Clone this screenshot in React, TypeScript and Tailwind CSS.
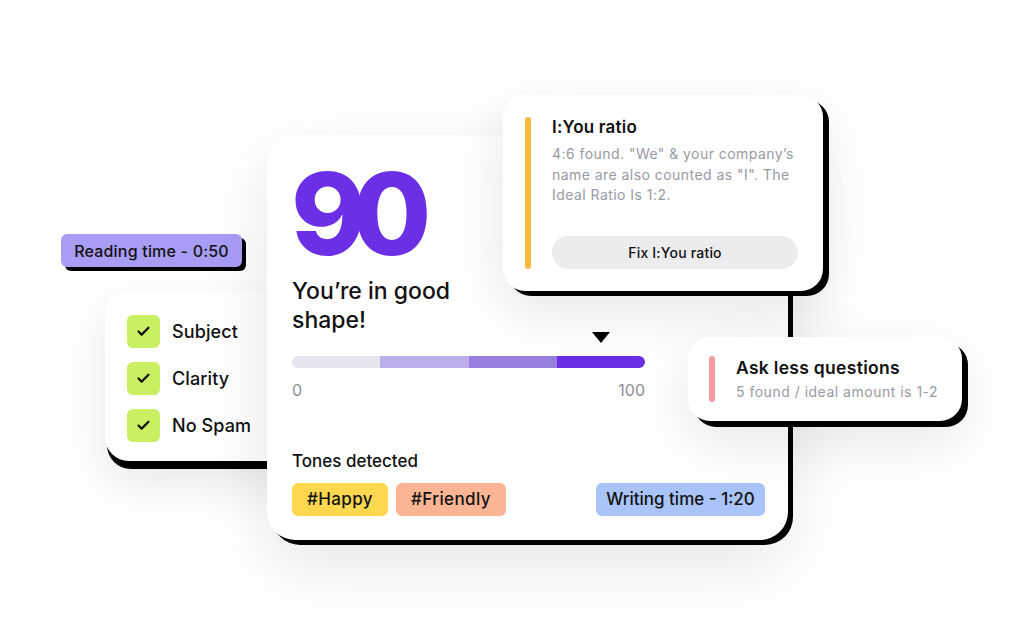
import { Check } from 'lucide-react';

const font = { fontFamily: 'Inter, "Noto Sans", sans-serif' };

function CheckItem({ label }: { label: string }) {
  return (
    <div className="flex items-center gap-3">
      <div className="flex h-[33px] w-[33px] items-center justify-center rounded-md bg-[#c9ef62]">
        <Check size={15} strokeWidth={3.5} className="text-[#111]" />
      </div>
      <span className="text-[18px] font-medium tracking-[0.1px] text-[#111]">{label}</span>
    </div>
  );
}

function Tag({ children, className }: { children: React.ReactNode; className: string }) {
  return (
    <span className={`flex h-[33px] items-center justify-center rounded-md text-[17px] font-medium text-[#111] ${className}`}>
      {children}
    </span>
  );
}

export default function App() {
  return (
    <div className="relative h-[636px] w-[1024px] overflow-hidden bg-white" style={font}>
      {/* reading time badge */}
      <div className="absolute left-[61px] top-[234px] flex h-[33px] w-[181px] items-center justify-center rounded-md bg-[#a99cf5] text-[16px] font-medium tracking-[0.2px] text-[#111] shadow-[4px_4px_0_#000]">
        Reading time - 0:50
      </div>

      {/* checklist */}
      <div className="absolute left-[105px] top-[291px] h-[170px] w-[200px] rounded-[24px] bg-white shadow-[2px_8px_0_#000,0_20px_50px_rgba(0,0,0,0.10)]">
        <div className="flex flex-col gap-[14px] pl-[22px] pt-[24px]">
          <CheckItem label="Subject" />
          <CheckItem label="Clarity" />
          <CheckItem label="No Spam" />
        </div>
      </div>

      {/* score card */}
      <div className="absolute left-[267px] top-[135px] h-[405px] w-[521px] rounded-[28px] bg-white shadow-[5px_5px_0_#000,0_24px_70px_rgba(0,0,0,0.10)]">
        <div className="flex h-full flex-col pl-[24px] pr-[23px] pt-[22px]">
          <div className="text-[114px] font-extrabold leading-[1] tracking-[-14px] text-[#6b2fe6]">90</div>
          <div className="mt-[6px] pl-px text-[23px] font-medium leading-[29px] text-[#111]">
            You’re in good
            <br />
            shape!
          </div>
          <div className="w-[354px] pl-px">
            <div className="-mt-[3px] flex h-[11px] justify-end pr-[35px]">
              <svg width="18" height="11" viewBox="0 0 18 11">
                <path d="M0 0h18L9 11z" fill="#000" />
              </svg>
            </div>
            <div className="mt-[13px] flex h-[12px] overflow-hidden rounded-full">
              <div className="flex-1 bg-[#e6e4ec]" />
              <div className="flex-1 bg-[#bcaee9]" />
              <div className="flex-1 bg-[#987fdd]" />
              <div className="flex-1 bg-[#6b2fe6]" />
            </div>
            <div className="mt-[10px] flex justify-between text-[16px] leading-[24px] text-[#8e8e96]">
              <span>0</span>
              <span>100</span>
            </div>
          </div>
          <div className="mt-[47px] pl-px text-[17px] font-medium leading-[24px] text-[#111]">Tones detected</div>
          <div className="mt-[10px] flex items-center gap-2 pl-px">
            <Tag className="w-[96px] bg-[#fdd84f] tracking-[0.4px]">#Happy</Tag>
            <Tag className="w-[110px] bg-[#fbb594] tracking-[0.4px]">#Friendly</Tag>
            <div className="flex-1" />
            <Tag className="w-[169px] bg-[#a9c4f8]">Writing time - 1:20</Tag>
          </div>
        </div>
      </div>

      {/* I:You ratio */}
      <div className="absolute left-[503px] top-[95px] h-[196px] w-[320px] rounded-[22px] bg-white shadow-[6px_5px_0_#000,0_20px_60px_rgba(0,0,0,0.10)]">
        <div className="flex h-full gap-[21px] px-[22px] py-[22px]">
          <div className="w-[6px] shrink-0 rounded-full bg-[#fbb940]" />
          <div className="flex flex-1 flex-col">
            <div className="text-[17px] font-semibold leading-[20px] tracking-[0.2px] text-[#111]">I:You ratio</div>
            <div className="mt-[7px] text-[14px] leading-[20.5px] tracking-[0.45px] text-[#9a9aa1]">
              4:6 found. "We" &amp; your company’s
              <br />
              name are also counted as "I". The
              <br />
              Ideal Ratio Is 1:2.
            </div>
            <div className="mt-auto flex h-[33px] w-[246px] items-center justify-center rounded-full bg-[#ececef] text-[14px] font-medium tracking-[0.2px] text-[#111]">
              Fix I:You ratio
            </div>
          </div>
        </div>
      </div>

      {/* questions */}
      <div className="absolute left-[688px] top-[337px] h-[84px] w-[274px] rounded-[22px] bg-white shadow-[6px_6px_0_#000,0_20px_60px_rgba(0,0,0,0.10)]">
        <div className="flex h-full items-center gap-[21px] px-[21px]">
          <div className="h-[46px] w-[6px] rounded-full bg-[#f59aa3]" />
          <div>
            <div className="text-[17.5px] font-semibold leading-[22px] tracking-[0.3px] text-[#111]">Ask less questions</div>
            <div className="mt-[4px] text-[14px] leading-[18px] tracking-[0.5px] text-[#9a9aa1]">5 found / ideal amount is 1-2</div>
          </div>
        </div>
      </div>
    </div>
  );
}
